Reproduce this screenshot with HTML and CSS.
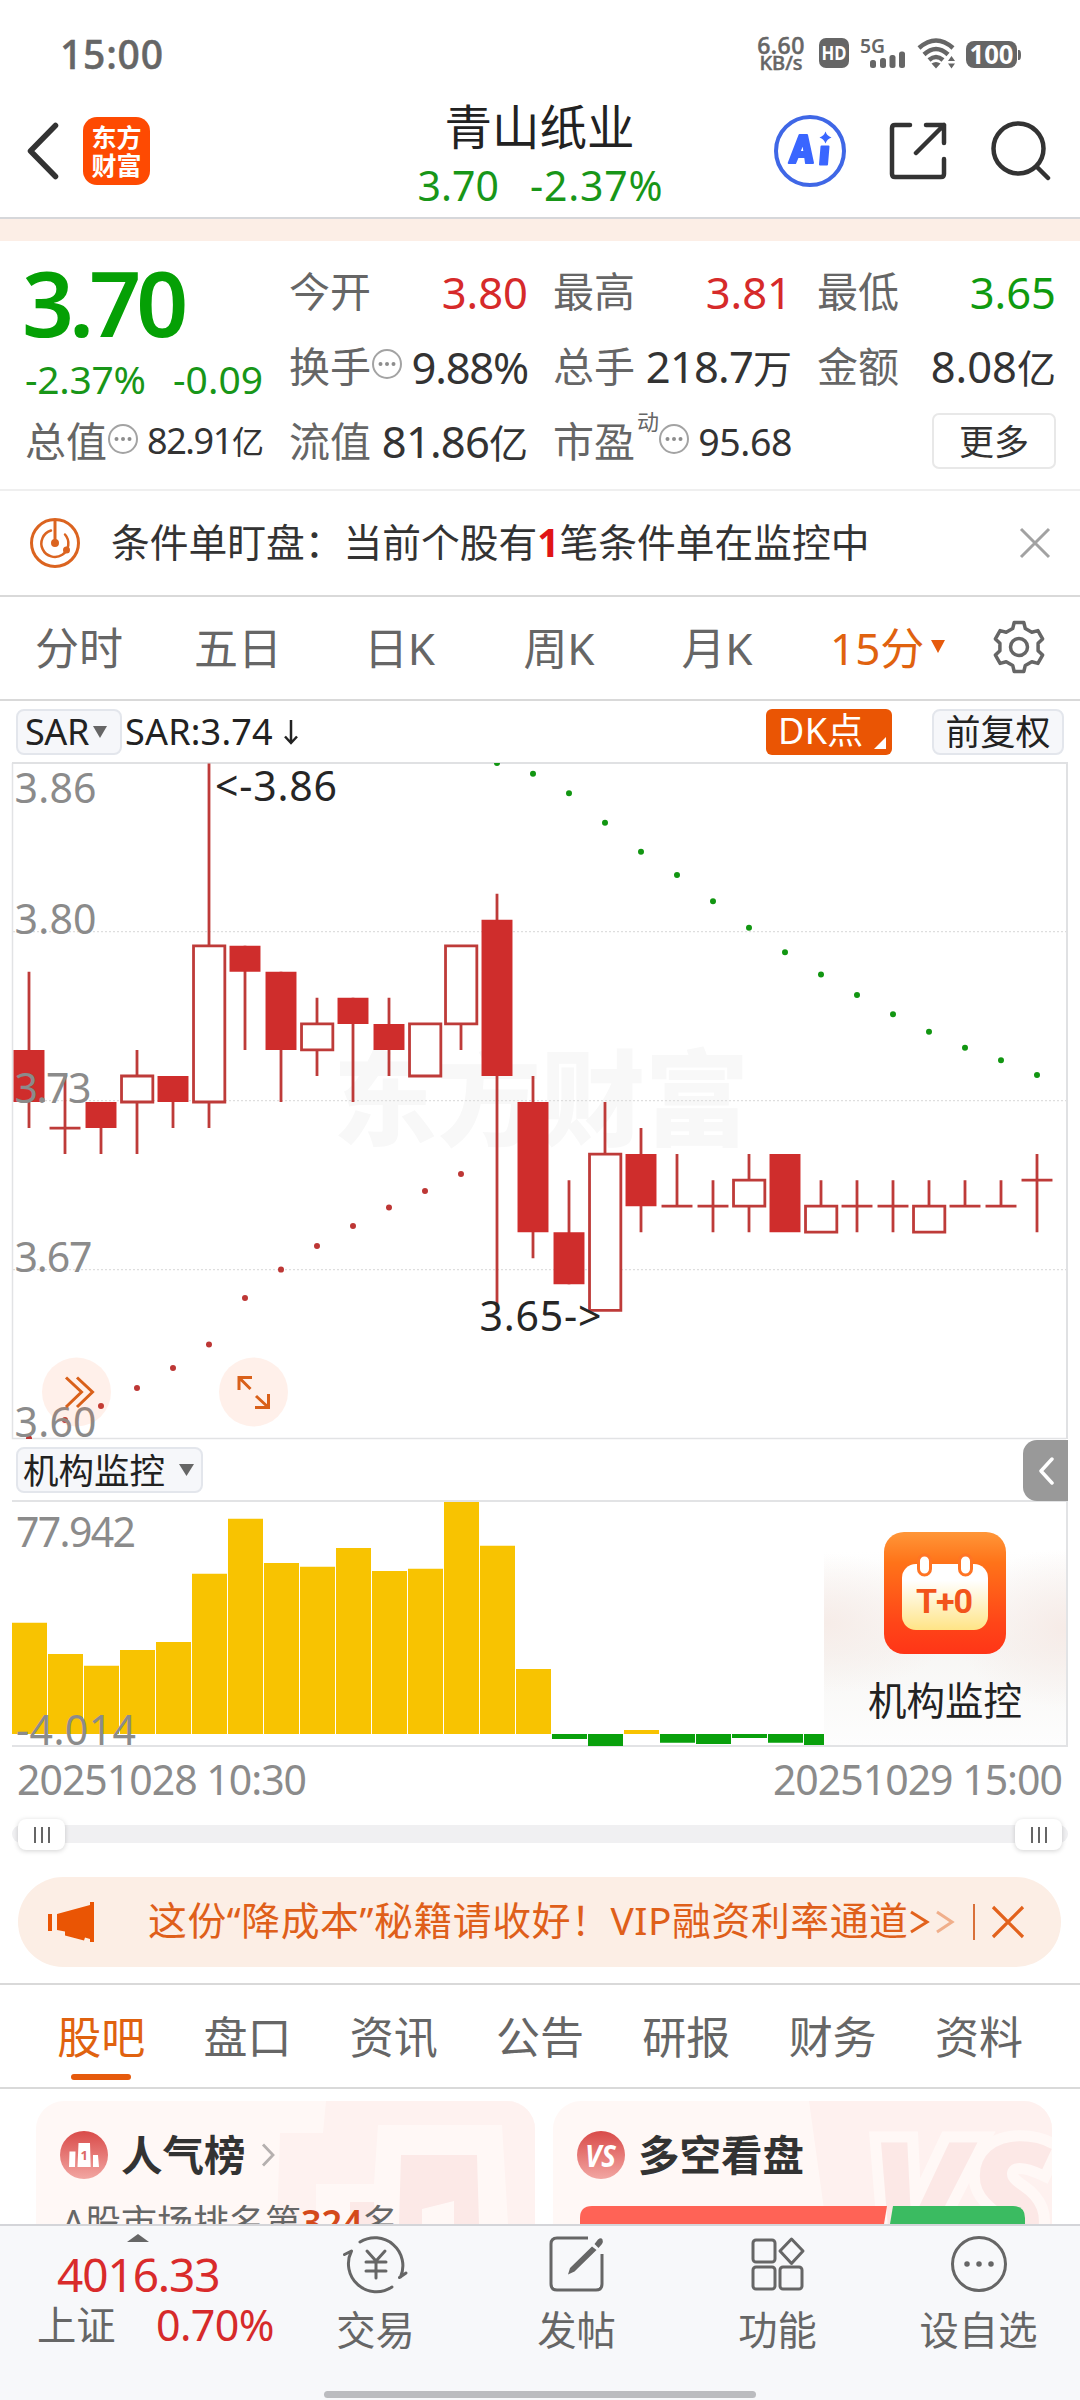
FILE: index.html
```html
<!DOCTYPE html>
<html lang="zh-CN">
<head>
<meta charset="utf-8">
<title>青山纸业</title>
<link rel="stylesheet" href="styles.css">
</head>
<body>
<svg class="defs" width="0" height="0">
  <symbol id="info" viewBox="0 0 32 32"><circle cx="16" cy="16" r="14" fill="none" stroke="#a3a3a3" stroke-width="2"/><path d="M9.5 16h.01M16 16h.01M22.5 16h.01" stroke="#8d8d8d" stroke-width="4" stroke-linecap="round"/></symbol>
</svg>

<div class="status">
  <span class="clock">15:00</span>
  <div class="status-right">
    <span class="speed"><span>6.60</span><span>KB/s</span></span>
    <svg width="250" height="50" viewBox="0 0 250 50" fill="#666">
      <rect x="6" y="9" width="30" height="30" rx="7"/>
      <text x="8.5" y="31" class="t-hd" textLength="25" lengthAdjust="spacingAndGlyphs">HD</text>
      <text x="47" y="23.5" class="t-5g" textLength="25" lengthAdjust="spacingAndGlyphs">5G</text>
      <rect x="57" y="31" width="6" height="8" rx="2.5"/><rect x="67" y="29" width="6" height="10" rx="2.5"/><rect x="76.500" y="26" width="6" height="13" rx="2.5"/><rect x="86" y="22.500" width="6" height="16.500" rx="2.5"/>
      <g fill="none" stroke="#666" stroke-width="4.500"><path d="M106 19Q123 4 140 19"/><path d="M111 25.500Q123 14.500 135 25.500"/><path d="M116 31Q123 25 130 31"/></g>
      <path d="M118.500 34.500Q123 31.500 127.500 34.500L123 39.500zM135 32l3.500-5 3.500 5zM135 34.500l3.500 5 3.500-5z"/>
      <rect x="153" y="12" width="51" height="27" rx="8"/><path d="M205 21h1q2 0 2 5t-2 5h-1z"/>
      <text x="156.500" y="35" class="t-bat" textLength="44" lengthAdjust="spacingAndGlyphs">100</text>
    </svg>
  </div>
</div>

<header class="header">
  <div class="header-left">
    <svg width="34" height="58" viewBox="0 0 34 58"><path d="M30.500 3.500L5.500 29L30.500 54.500" fill="none" stroke="#333" stroke-width="5.500" stroke-linejoin="round" stroke-linecap="round"/></svg>
    <div class="logo"><span>东方</span><span>财富</span></div>
  </div>
  <div class="header-title">
    <h1>青山纸业</h1>
    <div class="header-price"><span>3.70</span><span class="hp-chg">-2.37%</span></div>
  </div>
  <div class="header-right">
    <svg width="72" height="72" viewBox="0 0 72 72"><circle cx="36" cy="36" r="34" fill="none" stroke="#3f67e6" stroke-width="4"/>
      <path fill="#3a66ff" fill-rule="evenodd" stroke="#3a66ff" stroke-width="2" stroke-linejoin="round" d="M25.500 20h7.500l6 28h-7l-.8-6h-7.500l-2.500 6h-6.500zM29 28l-3.500 9h5z"/>
      <path fill="#3a66ff" stroke="#3a66ff" stroke-width="2" stroke-linejoin="round" d="M47.500 31.500h7l-1.500 18h-7z"/>
      <path fill="#3a66ff" d="M51.500 16.500q1.500 4.500 6 6q-4.500 1.500-6 6q-1.500-4.500-6-6q4.500-1.500 6-6z"/></svg>
    <svg width="58" height="58" viewBox="0 0 58 58" fill="none" stroke="#333" stroke-width="4.500" stroke-linecap="round" stroke-linejoin="round"><path d="M21 3H6Q3 3 3 6V52Q3 55 6 55H52Q55 55 55 52V37M37 3H55V21M55 3L27 31"/></svg>
    <svg width="60" height="60" viewBox="0 0 60 60" fill="none" stroke="#333" stroke-width="4.500" stroke-linecap="round"><circle cx="27.500" cy="27.500" r="25"/><path d="M45.500 45.500L57 57"/></svg>
  </div>
</header>
<div class="band"></div>

<section class="quote">
  <div class="quote-left">
    <div class="big">3.70</div>
    <div class="chg"><span class="c1">-2.37%</span><span>-0.09</span></div>
    <div class="cell"><span class="k">总值</span><svg class="info"><use href="#info"/></svg><span class="v small cap">82.91<i>亿</i></span></div>
  </div>
  <div class="quote-grid">
    <div class="cell"><span class="k">今开</span><span class="v red">3.80</span></div>
    <div class="cell"><span class="k">最高</span><span class="v red">3.81</span></div>
    <div class="cell"><span class="k">最低</span><span class="v green">3.65</span></div>
    <div class="cell"><span class="k">换手</span><svg class="info up"><use href="#info"/></svg><span class="v pct">9.88%</span></div>
    <div class="cell"><span class="k">总手</span><span class="v tight">218.7<i>万</i></span></div>
    <div class="cell"><span class="k">金额</span><span class="v">8.08<i>亿</i></span></div>
    <div class="cell"><span class="k">流值</span><span class="v tight">81.86<i>亿</i></span></div>
    <div class="cell"><span class="k">市盈</span><sup>动</sup><svg class="info"><use href="#info"/></svg><span class="v small">95.68</span></div>
    <div class="cell end"><button class="more">更多</button></div>
  </div>
</section>

<div class="alert">
  <svg width="52" height="52" viewBox="0 0 52 52" fill="none" stroke="#db6420" stroke-width="3"><circle cx="26" cy="26" r="23.500"/><path d="M22 13.500A13.500 13.500 0 1 0 36 17.500" stroke-width="2.500" stroke-linecap="round"/><path d="M26 2V26" /><circle cx="26" cy="26" r="2.500" fill="#db6420"/><circle cx="37.500" cy="33" r="2" fill="#db6420"/></svg>
  <span class="alert-text">条件单盯盘：当前个股有<b>1</b>笔条件单在监控中</span>
  <svg class="alert-x" width="32" height="32" viewBox="0 0 32 32" stroke="#a2a2a2" stroke-width="3"><path d="M2 2L30 30M30 2L2 30"/></svg>
</div>

<nav class="periods">
  <span>分时</span><span>五日</span><span>日K</span><span>周K</span><span>月K</span>
  <div class="on">15分<svg width="14" height="13" viewBox="0 0 14 13"><path d="M0 0h14L7 13z" fill="#e65a0c"/></svg></div>
  <svg class="gear" width="54" height="54" viewBox="-27 -27 54 54" fill="none" stroke="#666" stroke-width="3.500" stroke-linejoin="round"><path d="M-6.300-18.400L-4.800-24.500H4.800L6.300-18.400L12.800-14.700L18.900-16.400L23.600-8.100L19.100-3.700V3.700L23.600 8.100L18.900 16.400L12.800 14.700L6.300 18.400L4.800 24.500H-4.800L-6.300 18.400L-12.800 14.700L-18.900 16.400L-23.600 8.100L-19.100 3.700V-3.700L-23.600-8.100L-18.900-16.400L-12.800-14.700z"/><circle r="8.500"/></svg>
</nav>

<div class="indicator">
  <span class="chip sar">SAR<svg width="14" height="12" viewBox="0 0 14 12"><path d="M0 0h14L7 12z" fill="#666"/></svg></span>
  <span class="sar-val">SAR:3.74</span>
  <svg width="16" height="26" viewBox="0 0 16 26" fill="none" stroke="#222" stroke-width="2.500"><path d="M8 1V24M2 17.500L8 24L14 17.500"/></svg>
  <span class="dk">DK点<svg width="12" height="12" viewBox="0 0 12 12"><path d="M12 0V12H0z" fill="#fff"/></svg></span>
  <span class="chip adj">前复权</span>
</div>

<svg class="kline" width="1058" height="678" viewBox="11 762 1058 678">
  <text x="333" y="1138" class="wm" textLength="416">东方财富</text>
  <path d="M13 931.700H1066M13 1100.700H1066M13 1269.700H1066" stroke="#dedede" stroke-width="1.300" stroke-dasharray="2 2"/>
  <path d="M12.500 763V1438.500H1066" fill="none" stroke="#e2e3e5" stroke-width="1.500"/><path d="M12 763H1067V1439" fill="none" stroke="#e0e1e3" stroke-width="2"/>
  <svg x="11" y="763" width="1058" height="676" viewBox="11 763 1058 676">
  <g transform="translate(29 763.500) scale(36 26.040)">
    <path class="wick" d="M0 8V14M1 12V15M2 13V15M3 11V12M3 13V15M4 12V14M5 0V7M5 13V14M6 7V11M7 8V13M8 9V10M8 11V12M9 9V13M10 9V12M12 10V11M13 5V21M14 12V19M15 16V20M16 13V15M17 14V18M18 15V17M19 16V18M20 15V16M20 17V18M22 16V17M23 16V18M24 16V18M25 16V17M26 16V17M27 16V17M28 15V18"/>
    <path class="wick" d="M.57 14h.86M17.570 17h.86M18.570 17h.86M22.570 17h.86M23.570 17h.86M25.570 17h.86M26.570 17h.86M27.570 16h.86"/>
    <path fill="#cf2d2c" d="M-.43 11h.86v2h-.86zM1.570 13h.86v1h-.86zM3.570 12h.86v1h-.86zM5.570 7h.86v1h-.86zM6.570 8h.86v3h-.86zM8.570 9h.86v1h-.86zM9.570 10h.86v1h-.86zM12.570 6h.86v6h-.86zM13.570 13h.86v5h-.86zM14.570 18h.86v2h-.86zM16.570 15h.86v2h-.86zM20.570 15h.86v3h-.86z"/>
    <path class="wick" fill="#fff" d="M2.570 12h.87v1h-.87zM4.570 7h.87v6h-.87zM7.570 10h.87v1h-.87zM10.570 10h.87v2h-.87zM11.570 7h.87v3h-.87zM15.570 15h.87v6h-.87zM19.570 16h.87v1h-.87zM21.570 17h.87v1h-.87zM24.570 17h.87v1h-.87z"/>
  </g>
  <g transform="translate(29 0) scale(36 1)">
    <path class="dot rd" d="M0 1438.500h0M1 1420h0M2 1406h0M3 1388h0M4 1368h0M5 1344.600h0M6 1298h0M7 1269.600h0M8 1246h0M9 1226h0M10 1207.600h0M11 1191h0M12 1174h0"/>
    <path class="dot gr" d="M13 763h0M14 773.700h0M15 793.300h0M16 822.800h0M17 851.800h0M18 875h0M19 901.300h0M20 927.700h0M21 952.200h0M22 974.600h0M23 995h0M24 1014.300h0M25 1031.700h0M26 1047.800h0M27 1060.300h0M28 1075h0"/>
  </g>
  </svg>
  <g class="ax">
    <text x="14.500" y="803" textLength="82">3.86</text><text x="14.500" y="934" textLength="82">3.80</text><text x="14.500" y="1102.500" textLength="77">3.73</text><text x="14.500" y="1271.800" textLength="78">3.67</text><text x="14.500" y="1436.500" textLength="82">3.60</text>
  </g>
  <g class="mark"><text x="215" y="801" textLength="122">&lt;-3.86</text><text x="479.500" y="1330.700" textLength="122">3.65-&gt;</text></g>
  <g fill="#fb7032" fill-opacity=".1"><circle cx="76.500" cy="1392" r="34.500"/><circle cx="253.500" cy="1392" r="34.500"/></g>
  <g fill="none" stroke="#d9601a" stroke-width="3"><path d="M66 1377.500L81.500 1392L66 1407M77 1377.500L92.500 1392L77 1407M239 1390V1377.500H252M239 1377.500L250.500 1389M255 1407.500H268.500V1394M268.500 1407.500L256 1396"/></g>
</svg>

<div class="indicator second">
  <span class="chip inst">机构监控<svg width="15" height="12" viewBox="0 0 15 12"><path d="M0 0h15L7.500 12z" fill="#666"/></svg></span>
  <span class="handle"><svg width="16" height="28" viewBox="0 0 16 28"><path d="M14 2L3 14L14 26" fill="none" stroke="#fff" stroke-width="3.500" stroke-linecap="round" stroke-linejoin="round"/></svg></span>
</div>

<div class="sub">
  <svg width="812" height="244" viewBox="12 1502 812 244">
    <path fill="#f8c301" d="M12 1622.700h35v111.300h-35zM48 1654h35v80h-35zM84 1665.700h35v68.300h-35zM120 1650h35v84h-35zM156 1642h35v92h-35zM192 1573.700h35v160.300h-35zM228 1518.700h35v215.300h-35zM264 1563h35v171h-35zM300 1566.700h35v167.300h-35zM336 1548h35v186h-35zM372 1571h35v163h-35zM408 1568.700h35v165.300h-35zM444 1502h35v232h-35zM480 1545.700h35v188.300h-35zM516 1669h35v65h-35zM624 1730h35v4h-35z"/>
    <path fill="#09a00c" d="M552 1734h35v5h-35zM588 1734h35v12h-35zM660 1734h35v8.700h-35zM696 1734h35v10h-35zM732 1734h35v4h-35zM768 1734h35v8.700h-35zM804 1734h20v11h-20z"/>
    <g class="ax"><text x="16" y="1546.500" textLength="120">77.942</text><text x="16" y="1745" textLength="120">-4.014</text></g>
  </svg>
  <div class="t0">
    <svg width="122" height="122" viewBox="0 0 122 122">
      <defs>
        <linearGradient id="o" x1="0" y1="0" x2="0" y2="1"><stop offset="0" stop-color="#ff9638"/><stop offset=".25" stop-color="#ff7319"/><stop offset=".75" stop-color="#ff4518"/><stop offset="1" stop-color="#ff3517"/></linearGradient>
        <linearGradient id="y" x1="0" y1="0" x2="0" y2="1"><stop offset=".25" stop-color="#fff"/><stop offset="1" stop-color="#ffe486"/></linearGradient>
      </defs>
      <rect width="122" height="122" rx="20" fill="url(#o)"/>
      <rect x="18" y="32" width="86" height="66" rx="14" fill="url(#y)"/>
      <g fill="#fff" stroke="#ff7424" stroke-width="3"><rect x="34.500" y="23" width="12" height="20" rx="6"/><rect x="75.500" y="23" width="12" height="20" rx="6"/></g>
      <text x="32" y="80.500" class="t-t0" textLength="57">T+0</text>
    </svg>
    <span>机构监控</span>
  </div>
</div>

<div class="dates"><span>20251028 10:30</span><span>20251029 15:00</span></div>
<div class="slider"><span></span><span></span></div>

<div class="banner">
  <svg width="46" height="40" viewBox="0 0 46 40" fill="#ea5504"><path d="M0 12h4v17H0zM9 12L42 3V0h4v40h-4v-3l-5-1.500l-1 3l-19-5v-4L9 28z"/></svg>
  <span class="banner-text">这份“降成本”秘籍请收好！VIP融资利率通道</span>
  <svg class="arrows" width="46" height="26" viewBox="0 0 46 26" fill="none" stroke="#e2621c" stroke-width="3"><path d="M2 3L18 13L2 23"/><path d="M28 3L43 13L28 23" opacity=".45"/></svg>
  <i></i>
  <svg width="34" height="34" viewBox="0 0 34 34" stroke="#e2621c" stroke-width="3.200"><path d="M2 2L32 32M32 2L2 32"/></svg>
</div>

<nav class="sections">
  <span class="on">股吧</span><span>盘口</span><span>资讯</span><span>公告</span><span>研报</span><span>财务</span><span>资料</span>
</nav>

<div class="cards">
  <div class="card">
    <svg class="card-bg" width="300" height="123" viewBox="0 0 300 123"><path fill="#fef2f0" d="M57 0H300V123H239L233 24H109L105 83H47V123H8L11 32H54z"/><path fill="#fce9e7" d="M132 54h76l2 69h-25v-23l-32 8v15h-23zM81 101h24l2 22H81z"/></svg>
    <div class="card-head">
      <svg width="48" height="48" viewBox="0 0 48 48"><defs><linearGradient id="r" x1="0" y1="0" x2="0" y2="1"><stop offset="0" stop-color="#d94b49"/><stop offset="1" stop-color="#f2a6a2"/></linearGradient></defs><circle cx="24" cy="24" r="24" fill="url(#r)"/><path fill="#fff" d="M9.500 20.500h6L15 36H9zM18.500 12h11.500l.7 24H17.500zM33 24h5l1 12h-6z"/><text x="20.500" y="29" class="t-one">1</text></svg>
      <b>人气榜</b>
      <svg class="cv" width="14" height="24" viewBox="0 0 14 24"><path d="M2 1.500L12 12L2 22.500" fill="none" stroke="#b5b0af" stroke-width="2.800"/></svg>
    </div>
    <p>A股市场排名第<b>324</b>名</p>
  </div>
  <div class="card">
    <svg class="card-bg" width="300" height="123" viewBox="0 0 300 123"><path fill="#fef1ef" d="M-9 0H300V123H8z"/><text x="50" y="154" class="t-vsbg" textLength="182" lengthAdjust="spacingAndGlyphs">VS</text></svg>
    <div class="card-head">
      <svg width="48" height="48" viewBox="0 0 48 48"><circle cx="24" cy="24" r="24" fill="url(#r)"/><text x="8" y="36" class="t-vs" textLength="31" lengthAdjust="spacingAndGlyphs">VS</text></svg>
      <b>多空看盘</b>
    </div>
    <svg class="ratio" width="445" height="24" viewBox="0 0 445 24"><path fill="#ff6356" d="M12 0H307L303 24H0V12Q0 0 12 0z"/><path fill="#3bbb61" d="M313 0H433Q445 0 445 12V24H309z"/></svg>
  </div>
</div>

<footer class="tabbar">
  <div class="index">
    <svg class="caret" width="22" height="8" viewBox="0 0 22 8"><path d="M0 8L11 0L22 8z" fill="#666"/></svg>
    <div class="idx-v">4016.33</div>
    <div class="idx-r"><span>上证</span><span class="red">0.70%</span></div>
  </div>
  <div class="tab">
    <svg width="68" height="60" viewBox="0 0 68 60" fill="none" stroke="#666" stroke-width="3" stroke-linecap="round" stroke-linejoin="round"><path d="M18 8A28 28 0 0 1 58.500 43M58.500 43L57.500 43.500L64 39M50 53A28 28 0 0 1 9.500 17L2.500 20.500M9.500 17"/><path d="M25 17L34 27L43 17M34 27V44M24 28H44M24 37H44"/></svg>
    <span>交易</span>
  </div>
  <div class="tab">
    <svg width="60" height="60" viewBox="0 0 60 60"><path d="M41 4H10Q4 4 4 10V50Q4 56 10 56H49Q55 56 55 50V20" fill="none" stroke="#666" stroke-width="3"/><path fill="#666" d="M45 12.500L49.500 16L27.500 37.500L21 40.500L23 34zM47.500 10L51 5.500Q54 3 55.500 5.500Q56.500 8 55 10L51.500 14z"/></svg>
    <span>发帖</span>
  </div>
  <div class="tab">
    <svg width="60" height="60" viewBox="0 0 60 60" fill="none" stroke="#666" stroke-width="3"><rect x="5" y="6" width="22" height="22" rx="3"/><rect x="5" y="33" width="22" height="22" rx="3"/><rect x="32" y="33" width="22" height="22" rx="3"/><path stroke-linejoin="round" d="M43.500 5L55 17L43.500 29.500L32 17z"/></svg>
    <span>功能</span>
  </div>
  <div class="tab">
    <svg width="60" height="60" viewBox="0 0 60 60" fill="none" stroke="#666" stroke-width="3"><circle cx="30" cy="30" r="26.500"/><path d="M18 30h.01M30 30h.01M42 30h.01" stroke-width="5.500" stroke-linecap="round"/></svg>
    <span>设自选</span>
  </div>
  <div class="home"></div>
</footer>
</body>
</html>
```
FILE: styles.css
```css
* { box-sizing: border-box; }
body { margin: 0; width: 1080px; height: 2400px; overflow: hidden; background: #fff; color: #222; font-family: "Noto Sans", "Noto Sans CJK SC", sans-serif; display: flex; flex-direction: column; }
body > * { flex: none; }
svg { display: block; flex: none; }
h1, p { margin: 0; }
i { font-style: normal; }
.defs { position: absolute; }
.red { color: #d62a2a; }
.green { color: #0f9a0f; }

.status { height: 100px; padding: 8px 42px 0 60px; display: flex; justify-content: space-between; align-items: center; color: #666; }
.clock { font-size: 39px; font-weight: 500; letter-spacing: .8px; line-height: 50px; -webkit-text-stroke: .5px #666; margin-top: -1px; }
.status-right { display: flex; align-items: center; width: 325px; margin-right: -42px; height: 50px; }
.speed { display: flex; flex-direction: column; align-items: center; width: 54px; font-size: 20px; font-weight: 500; line-height: 18.500px; margin: 0 0 0 -1px; -webkit-text-stroke: .5px #666; }
.speed span:first-child { font-size: 23px; letter-spacing: .5px; }
.status-right svg { margin-left: 5px; }
.t-hd { font-size: 20px; font-weight: 700; fill: #fff; }
.t-5g { font-size: 20px; font-weight: 600; }
.t-bat { font-size: 26px; font-weight: 700; fill: #fff; }

.header { height: 119px; border-bottom: 2px solid #d6d7da; display: flex; justify-content: space-between; padding: 0 26px 0 25px; }
.header-left, .header-right { width: 308px; display: flex; align-items: center; padding-bottom: 15px; }
.logo { margin-left: 24px; width: 67px; height: 68px; border-radius: 14px; background: #fe4a02; color: #fff; font-size: 25px; font-weight: 700; line-height: 28px; display: flex; flex-direction: column; align-items: center; justify-content: center; }
.header-right { justify-content: flex-end; gap: 43px; }
.header-right svg:last-child { margin-left: 1px; margin-right: 3px; }
.header-title { display: flex; flex-direction: column; align-items: center; }
h1 { font-size: 47.5px; font-weight: 400; line-height: 54px; height: 56px; margin-top: 0; }
.header-price { display: flex; gap: 31px; font-size: 41px; line-height: 54px; margin: 2px 0 0 2px; color: #189618; }
.hp-chg { letter-spacing: .8px; }
.band { height: 22px; background: #fceee6; }

.quote { height: 250px; border-bottom: 2px solid #efefef; padding: 14px 23px 0 25px; display: flex; gap: 26px; }
.quote-left { width: 238px; }
.big { height: 100px; line-height: 95px; font-size: 91px; font-weight: 600; letter-spacing: -5px; color: #05a005; margin-left: -3px; }
.chg { height: 50px; line-height: 47px; font-size: 39px; display: flex; justify-content: space-between; color: #189618; }
.c1 { letter-spacing: -.3px; }
.quote-grid { display: grid; grid-template-columns: repeat(3, 238px); grid-auto-rows: 75px; column-gap: 26px; }
.cell { height: 75px; display: flex; align-items: center; line-height: 60px; white-space: nowrap; }
.cell .k { font-size: 41px; color: #666; margin-top: -4px; }
.cell .v { margin-left: auto; margin-right: -1px; font-size: 43.5px; margin-top: -2px; }
.cell .v:not(.red):not(.green) { color: #333; }
.cell .v i { font-size: 39px; letter-spacing: 0; }
.cell .pct { letter-spacing: -1.200px; }
.cell .tight { letter-spacing: -.8px; }
.cell .small { font-size: 37.5px; letter-spacing: -.4px; }
.cell .cap { font-size: 36px; letter-spacing: -1.400px; }
.cell .small i { font-size: 32px; }
.info { width: 32px; height: 32px; margin-top: -8px; }
.cell sup { font-size: 22px; line-height: 24px; align-self: flex-start; color: #666; margin: 4px -1px 0 2px; }
.cell.end { justify-content: flex-end; }
.more { width: 124px; height: 56px; margin: -4px -1px 0 0; border: 2px solid #e8e8e8; border-radius: 7px; background: #fff; font: 35px/46px "Noto Sans CJK SC", sans-serif; color: #333; padding: 0 0 2px; }

.alert { height: 106px; border-bottom: 2px solid #d9d9d9; display: flex; align-items: center; padding: 0 29px; }
.alert-text { margin-left: 30px; font-size: 38.750px; line-height: 56px; margin-top: -3px; color: #333; white-space: nowrap; }
.alert-text b { color: #e01414; }
.alert-x { margin-left: auto; }

.periods { height: 104px; border-bottom: 2px solid #d9d9d9; display: grid; grid-template-columns: 158px 160px 163px 156px 160px 190px 66px; align-items: center; font-size: 44px; line-height: 60px; color: #666; text-align: center; }
.periods span, .on { white-space: nowrap; margin-top: -1px; }
.periods .on { color: #e0620f; display: flex; align-items: center; gap: 7px; padding-left: 33px; }
.periods .on svg { margin-top: -3px; }
.gear { margin-left: 5px; margin-top: -3px; }

.indicator { height: 61px; padding: 1px 16px 0; display: flex; align-items: center; font-size: 36px; line-height: 44px; position: relative; }
.chip { height: 46px; border: 2px solid #e3e6ec; border-radius: 8px; background: #f6f7fa; display: flex; align-items: center; white-space: nowrap; }
.sar { width: 106px; padding-left: 7px; gap: 4px; letter-spacing: -.4px; }
.sar-val { margin: 0 10px 0 3px; letter-spacing: .2px; }
.dk { margin-left: auto; width: 126px; height: 46px; border-radius: 6px; background: #ea5504; color: #fff; display: flex; padding-left: 12px; letter-spacing: .4px; position: relative; }
.dk svg { position: absolute; right: 6px; bottom: 6px; }
.adj { margin-left: 40px; width: 132px; justify-content: center; font-size: 35px; line-height: 42px; }
.kline { margin-left: 11px; }
.wick { stroke: #be3b39; stroke-width: 2.800; vector-effect: non-scaling-stroke; }
.dot { vector-effect: non-scaling-stroke; stroke-width: 6; stroke-linecap: round; }
.rd { stroke: #bd3735; }
.gr { stroke: #129612; }
.ax text { font-size: 41px; fill: #8b8b8b; }
.mark text { font-size: 41px; fill: #262626; }
.wm { font-family: "Noto Sans CJK SC", sans-serif; font-size: 104px; font-weight: 900; fill: #f8f8f8; }

.second { height: 60px; padding: 0 16px; }
.inst { width: 187px; padding-left: 5px; font-size: 35.500px; gap: 14px; }
.handle { position: absolute; left: 1023px; top: 0; width: 45px; height: 61px; background: #999; border-radius: 14px 0 0 14px; display: flex; align-items: center; justify-content: center; }
.sub { height: 247px; margin: 0 12px; width: 1056px; border: 2px solid #e2e3e5; border-left-width: 0; display: flex; }
.t0 { flex: 1; display: flex; flex-direction: column; align-items: center; padding: 30px 0 0 0; font-size: 38.500px; line-height: 56px; background: radial-gradient(ellipse 130px 70px at 0 50%, #f6ece8, transparent), radial-gradient(ellipse 110px 80px at 100% 52%, #f6ebe7, transparent), linear-gradient(#fff 20%, #f7f6f4 60%, #fdfdfd); }
.t0 span { margin-top: 18px; }
.t-t0 { font-family: Roboto, sans-serif; font-size: 34px; font-weight: 700; fill: #f2541b; }
.dates { height: 76px; padding: 4px 18px 0 17px; display: flex; justify-content: space-between; font-size: 41px; line-height: 56px; letter-spacing: -1px; color: #8b8b8b; }
.slider { height: 18px; margin: 2px 12px 0; border-radius: 9px; background: #f0f0f2; display: flex; justify-content: space-between; align-items: center; padding: 0 6px; }
.slider span { width: 47px; height: 31px; border-radius: 8px; background: linear-gradient(#666, #666) 16px 8px/2px 16px no-repeat, linear-gradient(#666, #666) 23px 8px/2px 16px no-repeat, linear-gradient(#666, #666) 30px 8px/2px 16px no-repeat, #fff; box-shadow: 0 1px 5px rgba(0, 0, 0, .18); }

.banner { height: 90px; margin: 34px 19px 0 18px; border-radius: 45px; background: #fceee5; display: flex; align-items: center; padding: 0 0 0 30px; color: #df5f1a; }
.banner-text { flex: none; margin-left: 54px; font-size: 38.800px; letter-spacing: .600px; line-height: 56px; margin-top: -4px; white-space: nowrap; width: 758px; }
.arrows { margin-left: 3px; }
.banner i { flex: none; width: 2px; height: 36px; background: #d9703a; margin: 0 16px 0 18px; }

.sections { height: 106px; margin-top: 16px; border-top: 2px solid #d9d9d9; border-bottom: 2px solid #d9d9d9; padding: 0 28px; display: grid; grid-template-columns: repeat(7, 146.300px); text-align: center; font-size: 44px; line-height: 104px; color: #666; }
.sections .on { color: #e0620f; position: relative; margin-top: 0; }
.sections .on::after { content: ""; position: absolute; left: 43px; bottom: 9px; width: 60px; height: 6px; border-radius: 3px; background: #e65a0c; }

.cards { height: 135px; padding: 12px 28px 0 36px; display: flex; gap: 18px; overflow: hidden; }
.card { width: 499px; height: 200px; border-radius: 28px; background: #fff8f6; position: relative; overflow: hidden; padding: 30px 24px; flex: none; }
.card-bg { position: absolute; right: -66px; top: 0; overflow: visible; }
.card:first-child .card-bg { right: -34px; }
.card-head { display: flex; align-items: center; height: 48px; position: relative; font-size: 41.500px; color: #333; }
.card-head b { margin: -4px 0 0 13px; line-height: 50px; font-family: "Noto Sans CJK SC", sans-serif; }
.cv { margin-left: 15px; }
.card p { position: relative; margin: 19px 0 0 2px; font-size: 36px; line-height: 50px; color: #666; }
.card p b { color: #d4491b; font-weight: 600; }
.ratio { margin: 27px 0 0 3px; position: relative; }
.t-one { font-size: 13px; font-weight: 700; fill: #dd6a67; }
.t-vs { font-size: 31px; font-weight: 700; font-style: italic; fill: #fff; }
.t-vsbg { font-size: 158px; font-weight: 800; font-style: italic; fill: #fce8e6; stroke: #fff8f6; stroke-width: 22px; paint-order: stroke; }

.tabbar { height: 177px; border-top: 2px solid #d4d5d9; background: #f7f8fa; display: flex; position: relative; color: #666; font-size: 39.300px; line-height: 56px; }
.index { width: 275px; padding: 8px 0 0 37px; }
.caret { margin-left: 90px; }
.idx-v { font-size: 46px; line-height: 60px; letter-spacing: -1.100px; margin: 2px 0 0 20px; color: #d92b2b; }
.idx-r { display: flex; justify-content: space-between; width: 237px; margin-top: -7px; align-items: center; }
.idx-r .red { font-size: 43px; letter-spacing: -.6px; }
.tab { width: 201px; display: flex; flex-direction: column; align-items: center; padding-top: 8px; white-space: nowrap; }
.tab span { margin-top: 8px; }
.home { position: absolute; left: 324px; top: 165px; width: 432px; height: 7px; border-radius: 4px; background: #bbbcbf; }
```
